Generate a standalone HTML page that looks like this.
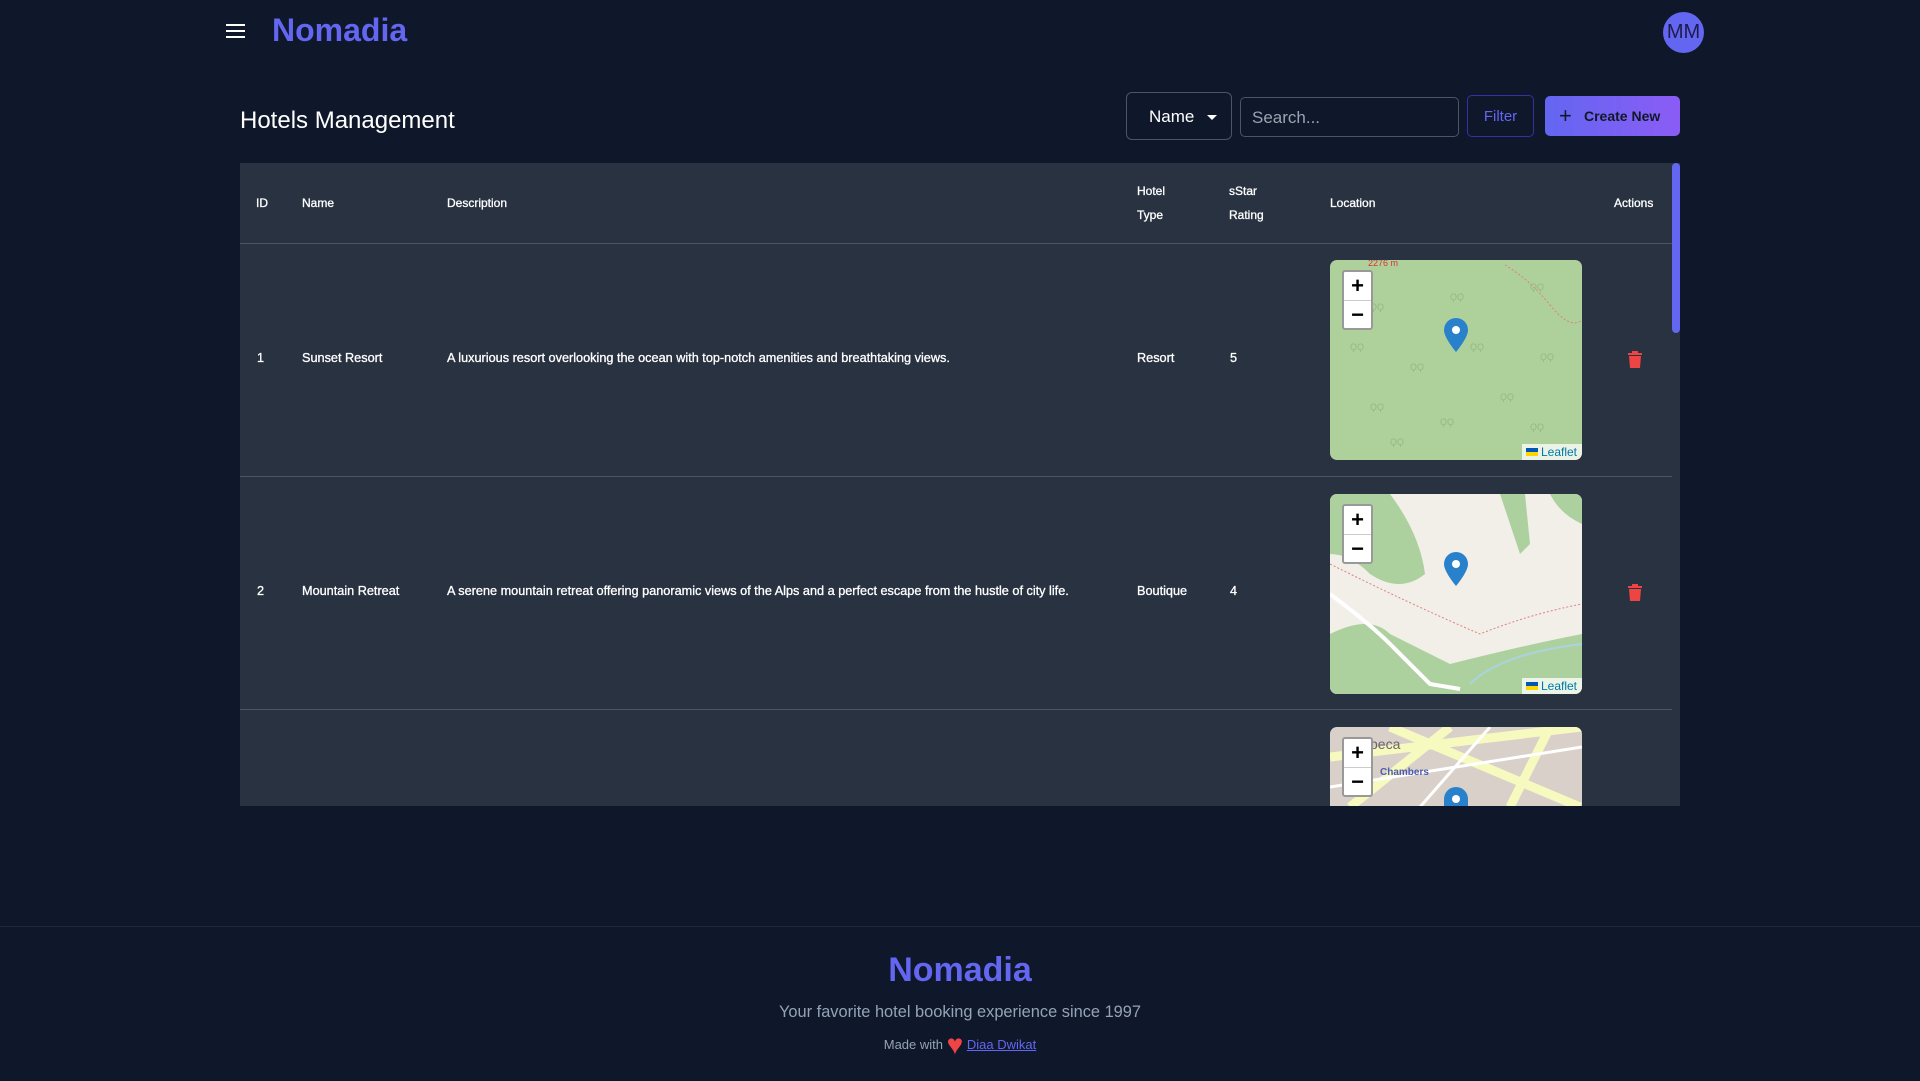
<!DOCTYPE html>
<html><head><meta charset="utf-8"><style>
*{box-sizing:border-box;margin:0;padding:0}
body{width:1920px;height:1081px;background:#0f172a;font-family:"Liberation Sans",Arial,sans-serif;color:#fff;position:relative;overflow:hidden}
.abs{position:absolute}
.logo{left:272px;top:12px;font-size:32px;font-weight:bold;color:#6366f1}
.ham{left:226px;top:24px;width:19px}
.ham i{display:block;height:2px;background:#fff;margin-bottom:4px}
.av{left:1663px;top:12px;width:41px;height:41px;border-radius:50%;background:#6366f1;color:#1e1b4b;font-size:20px;display:flex;align-items:center;justify-content:center}
.title{left:240px;top:107px;font-size:24px}
.sel{left:1126px;top:92px;width:106px;height:48px;border:1px solid #4b5563;border-radius:6px;font-size:17px;padding:14px 0 0 22px}
.sel:after{content:"";position:absolute;right:14px;top:22px;border:5px solid transparent;border-top-color:#fff;border-bottom:0}
.search{left:1240px;top:97px;width:219px;height:40px;border:1px solid #4b5563;border-radius:5px;font-size:17px;color:#9ca3af;padding:10px 11px}
.filter{left:1467px;top:95px;width:67px;height:42px;border:1px solid #3730a3;border-radius:5px;font-size:15px;color:#6366f1;text-align:center;line-height:42px}
.create{left:1545px;top:96px;width:135px;height:40px;border-radius:5px;background:linear-gradient(90deg,#6366f1,#8b5cf6);color:#111827;font-weight:bold;font-size:14px;line-height:40px;padding-left:39px}
.create:before{content:"+";position:absolute;left:14px;top:0;font-size:22px;font-weight:normal}
.table{left:240px;top:163px;width:1440px;height:643px;background:#293241;overflow:hidden}
.th{position:absolute;font-size:12px;line-height:24px;-webkit-text-stroke:0.3px #fff}
.td{position:absolute;font-size:12.7px;-webkit-text-stroke:0.3px #fff}
.line{position:absolute;left:0;width:1432px;height:1px;background:#4b5563}
.map{position:absolute;left:1090px;width:252px;height:200px;border-radius:7px;overflow:hidden}
.zc{position:absolute;left:12px;top:10px;width:31px;height:60px;background:#fff;border:2px solid #999;border-radius:3px;color:#000;font-size:22px;text-align:center;line-height:28px;font-weight:bold}
.zc i{display:block;height:1px;background:#ccc}
.attr{position:absolute;right:0;bottom:0;background:rgba(255,255,255,.75);font-size:12px;color:#0078a8;padding:1px 5px 1px 4px}
.attr b{display:inline-block;width:12px;height:8px;background:linear-gradient(#0057b7 50%,#ffd700 50%);margin-right:3px}
.trash{position:absolute;left:1388px;width:14px}
.sb{left:1672px;top:163px;width:8px;height:170px;background:#6366f1;border-radius:4px}
.foot{left:0;top:926px;width:1920px;height:1px;background:#1e293b}
.c{left:0;width:1920px;text-align:center}
</style></head><body>
<div class="abs ham"><i></i><i></i><i></i></div>
<div class="abs logo">Nomadia</div>
<div class="abs av">MM</div>
<div class="abs title">Hotels Management</div>
<div class="abs sel">Name</div>
<div class="abs search">Search...</div>
<div class="abs filter">Filter</div>
<div class="abs create">Create New</div>
<div class="abs table">
 <div class="th" style="left:16px;top:28px">ID</div>
 <div class="th" style="left:62px;top:28px">Name</div>
 <div class="th" style="left:207px;top:28px">Description</div>
 <div class="th" style="left:897px;top:16px">Hotel<br>Type</div>
 <div class="th" style="left:989px;top:16px">sStar<br>Rating</div>
 <div class="th" style="left:1090px;top:28px">Location</div>
 <div class="th" style="left:1374px;top:28px">Actions</div>
 <div class="line" style="top:80px"></div>
 <div class="td" style="left:17px;top:188px">1</div>
 <div class="td" style="left:62px;top:188px">Sunset Resort</div>
 <div class="td" style="left:207px;top:188px">A luxurious resort overlooking the ocean with top-notch amenities and breathtaking views.</div>
 <div class="td" style="left:897px;top:188px">Resort</div>
 <div class="td" style="left:990px;top:188px">5</div>
 <div class="map" style="top:97px;background:#aed09a">
  <svg width="252" height="200" style="position:absolute;left:0;top:0"><g fill="none">
  <path d="M175 5 Q200 20 220 45 T252 60" stroke="#e08080" stroke-dasharray="2 2"/>
  </g><g fill="#93b983" font-size="9" font-family="Liberation Sans">
  <text x="40" y="50">ϘϘ</text><text x="120" y="40">ϘϘ</text><text x="200" y="30">ϘϘ</text><text x="80" y="110">ϘϘ</text><text x="170" y="140">ϘϘ</text><text x="40" y="150">ϘϘ</text><text x="110" y="165">ϘϘ</text><text x="210" y="100">ϘϘ</text><text x="20" y="90">ϘϘ</text><text x="140" y="90">ϘϘ</text><text x="60" y="185">ϘϘ</text><text x="200" y="170">ϘϘ</text></g>
  <text x="38" y="6" fill="#d33" font-size="9" font-family="Liberation Sans">2276 m</text>
  <path d="M126 58 a12 12 0 0 1 12 12 c0 8 -12 22 -12 22 c0 0 -12 -14 -12 -22 a12 12 0 0 1 12 -12z" fill="#2a81cb"/><circle cx="126" cy="70" r="4" fill="#fff"/></svg>
  <div class="zc">+<i></i>−</div><div class="attr"><b></b>Leaflet</div>
 </div>
 <svg class="trash" style="top:188px" width="14" height="17" viewBox="0 0 14 17"><rect x="0" y="2" width="14" height="2" fill="#ef4444"/><rect x="4" y="0" width="6" height="3" fill="#ef4444"/><path d="M1 5h12l-1 12H2z" fill="#ef4444"/></svg>
 <div class="line" style="top:313px"></div>
 <div class="td" style="left:17px;top:421px">2</div>
 <div class="td" style="left:62px;top:421px">Mountain Retreat</div>
 <div class="td" style="left:207px;top:421px">A serene mountain retreat offering panoramic views of the Alps and a perfect escape from the hustle of city life.</div>
 <div class="td" style="left:897px;top:421px">Boutique</div>
 <div class="td" style="left:990px;top:421px">4</div>
 <div class="map" style="top:331px;background:#f2efe9">
  <svg width="252" height="200" style="position:absolute;left:0;top:0">
  <path d="M0 0H60 Q90 40 95 80 Q70 100 40 80 Q20 60 0 60z" fill="#add19e"/>
  <path d="M160 0H252V30Q230 20 220 0 M170 0 Q180 30 190 60 L200 50 L195 0z" fill="#add19e"/>
  <path d="M0 140 Q40 120 60 140 L120 170 Q200 150 252 140 V200 H0z" fill="#add19e"/>
  <path d="M0 100 Q40 130 60 150 T100 190 L130 195" fill="none" stroke="#fff" stroke-width="4"/>
  <path d="M140 190 Q170 160 252 150" fill="none" stroke="#aad3df" stroke-width="2"/>
  <path d="M0 70 Q80 110 150 140 Q200 120 252 110" fill="none" stroke="#e08080" stroke-dasharray="2 2"/>
  <path d="M126 58 a12 12 0 0 1 12 12 c0 8 -12 22 -12 22 c0 0 -12 -14 -12 -22 a12 12 0 0 1 12 -12z" fill="#2a81cb"/><circle cx="126" cy="70" r="4" fill="#fff"/></svg>
  <div class="zc">+<i></i>−</div><div class="attr"><b></b>Leaflet</div>
 </div>
 <svg class="trash" style="top:421px" width="14" height="17" viewBox="0 0 14 17"><rect x="0" y="2" width="14" height="2" fill="#ef4444"/><rect x="4" y="0" width="6" height="3" fill="#ef4444"/><path d="M1 5h12l-1 12H2z" fill="#ef4444"/></svg>
 <div class="line" style="top:546px"></div>
 <div class="map" style="top:564px;background:#d9d0c9">
  <svg width="252" height="80" style="position:absolute;left:0;top:0">
  <path d="M0 30 L252 0 M20 80 L120 0 M180 80 L220 0 M60 0 L250 80" stroke="#f7fabf" stroke-width="9" fill="none"/>
  <path d="M0 60 L252 20 M90 80 L160 0" stroke="#fff" stroke-width="3" fill="none"/>
  <text x="40" y="22" fill="#666" font-size="14" font-family="Liberation Sans">beca</text>
  <text x="50" y="48" fill="#4c5bb0" font-size="10" font-weight="bold" font-family="Liberation Sans">Chambers</text>
  <path d="M126 60 a12 12 0 0 1 12 12 v10 h-24 v-10 a12 12 0 0 1 12 -12z" fill="#2a81cb"/><circle cx="126" cy="72" r="4" fill="#fff"/></svg>
  <div class="zc">+<i></i>−</div>
 </div>
</div>
<div class="abs sb"></div>
<div class="abs foot"></div>
<div class="abs c" style="top:951px;font-size:34px;font-weight:bold;color:#6366f1">Nomadia</div>
<div class="abs c" style="top:1003px;font-size:16.4px;color:#94a3b8">Your favorite hotel booking experience since 1997</div>
<div class="abs c" style="top:1029px;font-size:13px;color:#94a3b8">Made with <span style="color:#ef4444;font-size:28px;vertical-align:-5px">♥</span> <span style="color:#6366f1;text-decoration:underline">Diaa Dwikat</span></div>
</body></html>
